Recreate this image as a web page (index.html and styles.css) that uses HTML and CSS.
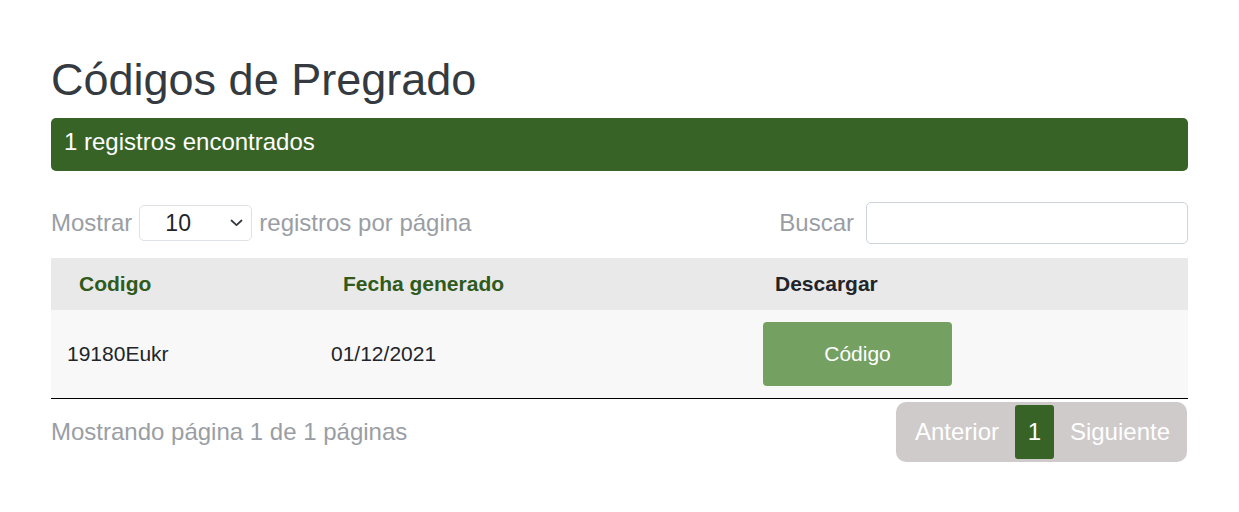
FILE: index.html
```html
<!DOCTYPE html>
<html lang="es">
<head>
<meta charset="utf-8">
<title>Códigos de Pregrado</title>
<link rel="stylesheet" href="styles.css">
</head>
<body>
<div class="container">
  <h1 class="title">Códigos de Pregrado</h1>
  <div class="alert">1 registros encontrados</div>
  <div class="controls">
    <div class="length">
      <span>Mostrar</span>
      <div class="select"><span class="select-val">10</span>
        <svg class="chev" width="13" height="8" viewBox="0 0 13 8"><path d="M1.5 1.5 L6.5 6.2 L11.5 1.5" fill="none" stroke="#343a40" stroke-width="1.8" stroke-linecap="round" stroke-linejoin="round"/></svg>
      </div>
      <span>registros por página</span>
    </div>
    <div class="search">
      <span>Buscar</span>
      <input class="search-input" type="text">
    </div>
  </div>
  <table class="table">
    <thead>
      <tr>
        <th class="c1 green">Codigo</th>
        <th class="c2 green">Fecha generado</th>
        <th class="c3">Descargar</th>
      </tr>
    </thead>
    <tbody>
      <tr>
        <td class="c1">19180Eukr</td>
        <td class="c2">01/12/2021</td>
        <td class="c3"><button class="btn">Código</button></td>
      </tr>
    </tbody>
  </table>
  <div class="footer">
    <span class="info">Mostrando página 1 de 1 páginas</span>
    <div class="pager">
      <span class="pg">Anterior</span>
      <span class="pg active">1</span>
      <span class="pg">Siguiente</span>
    </div>
  </div>
</div>
</body>
</html>
```
FILE: styles.css
```css
* { box-sizing: border-box; }
body {
  margin: 0;
  font-family: "Liberation Sans", Arial, sans-serif;
  color: #212529;
  background: #fff;
}
.container {
  width: 1137px;
  margin-left: 51px;
  padding-top: 53px;
}
.title {
  font-size: 45px;
  font-weight: 400;
  line-height: 54px;
  margin: 0 0 11px;
  color: #343a40;
}
.alert {
  background: #386327;
  color: #fff;
  font-size: 24px;
  line-height: 30px;
  padding: 9px 13px 14px;
  border-radius: 5px;
}
.controls {
  display: flex;
  justify-content: space-between;
  align-items: center;
  margin-top: 31px;
  color: #9a9ea4;
  font-size: 24px;
}
.length, .search {
  display: flex;
  align-items: center;
  gap: 7px;
}
.search { gap: 12px; }
.select {
  width: 113px;
  height: 36px;
  border: 1px solid #dee2e6;
  border-radius: 5px;
  display: flex;
  align-items: center;
  justify-content: space-between;
  padding: 0 8px 0 25px;
  color: #212529;
  background: #fff;
}
.select-val { font-size: 23px; }
.search-input {
  width: 322px;
  height: 42px;
  border: 1px solid #ced4da;
  border-radius: 5px;
  background: #fff;
  font-size: 20px;
}
.table {
  width: 100%;
  border-collapse: collapse;
  margin-top: 14px;
  font-size: 21px;
  table-layout: fixed;
}
thead tr { background: #e9e9e9; }
th {
  text-align: left;
  font-weight: 700;
  height: 52px;
  padding: 0 0 0 28px;
  color: #212529;
}
th.green { color: #2f5a1c; }
.c1 { width: 264px; }
.c2 { width: 432px; }
tbody tr { background: #f8f8f8; border-bottom: 1px solid #000; }
td {
  height: 88px;
  padding: 0 0 0 16px;
  color: #212529;
}
.btn {
  display: block;
  width: 189px;
  height: 64px;
  border: none;
  border-radius: 4px;
  background: #74a062;
  color: #fff;
  font-family: inherit;
  font-size: 21px;
}
.footer {
  display: flex;
  justify-content: space-between;
  align-items: center;
  margin-top: 3px;
}
.info {
  color: #9a9ea4;
  font-size: 24px;
}
.pager {
  display: flex;
  align-items: center;
  justify-content: space-between;
  background: #cfcbcb;
  border-radius: 10px;
  padding: 0 17px 0 19px;
  height: 60px;
  width: 291px;
  margin-right: 1px;
}
.pg {
  color: #fff;
  font-size: 24px;
}
.pg.active {
  background: #386327;
  height: 54px;
  width: 39px;
  display: flex;
  align-items: center;
  justify-content: center;
  border-radius: 3px;
}
```
